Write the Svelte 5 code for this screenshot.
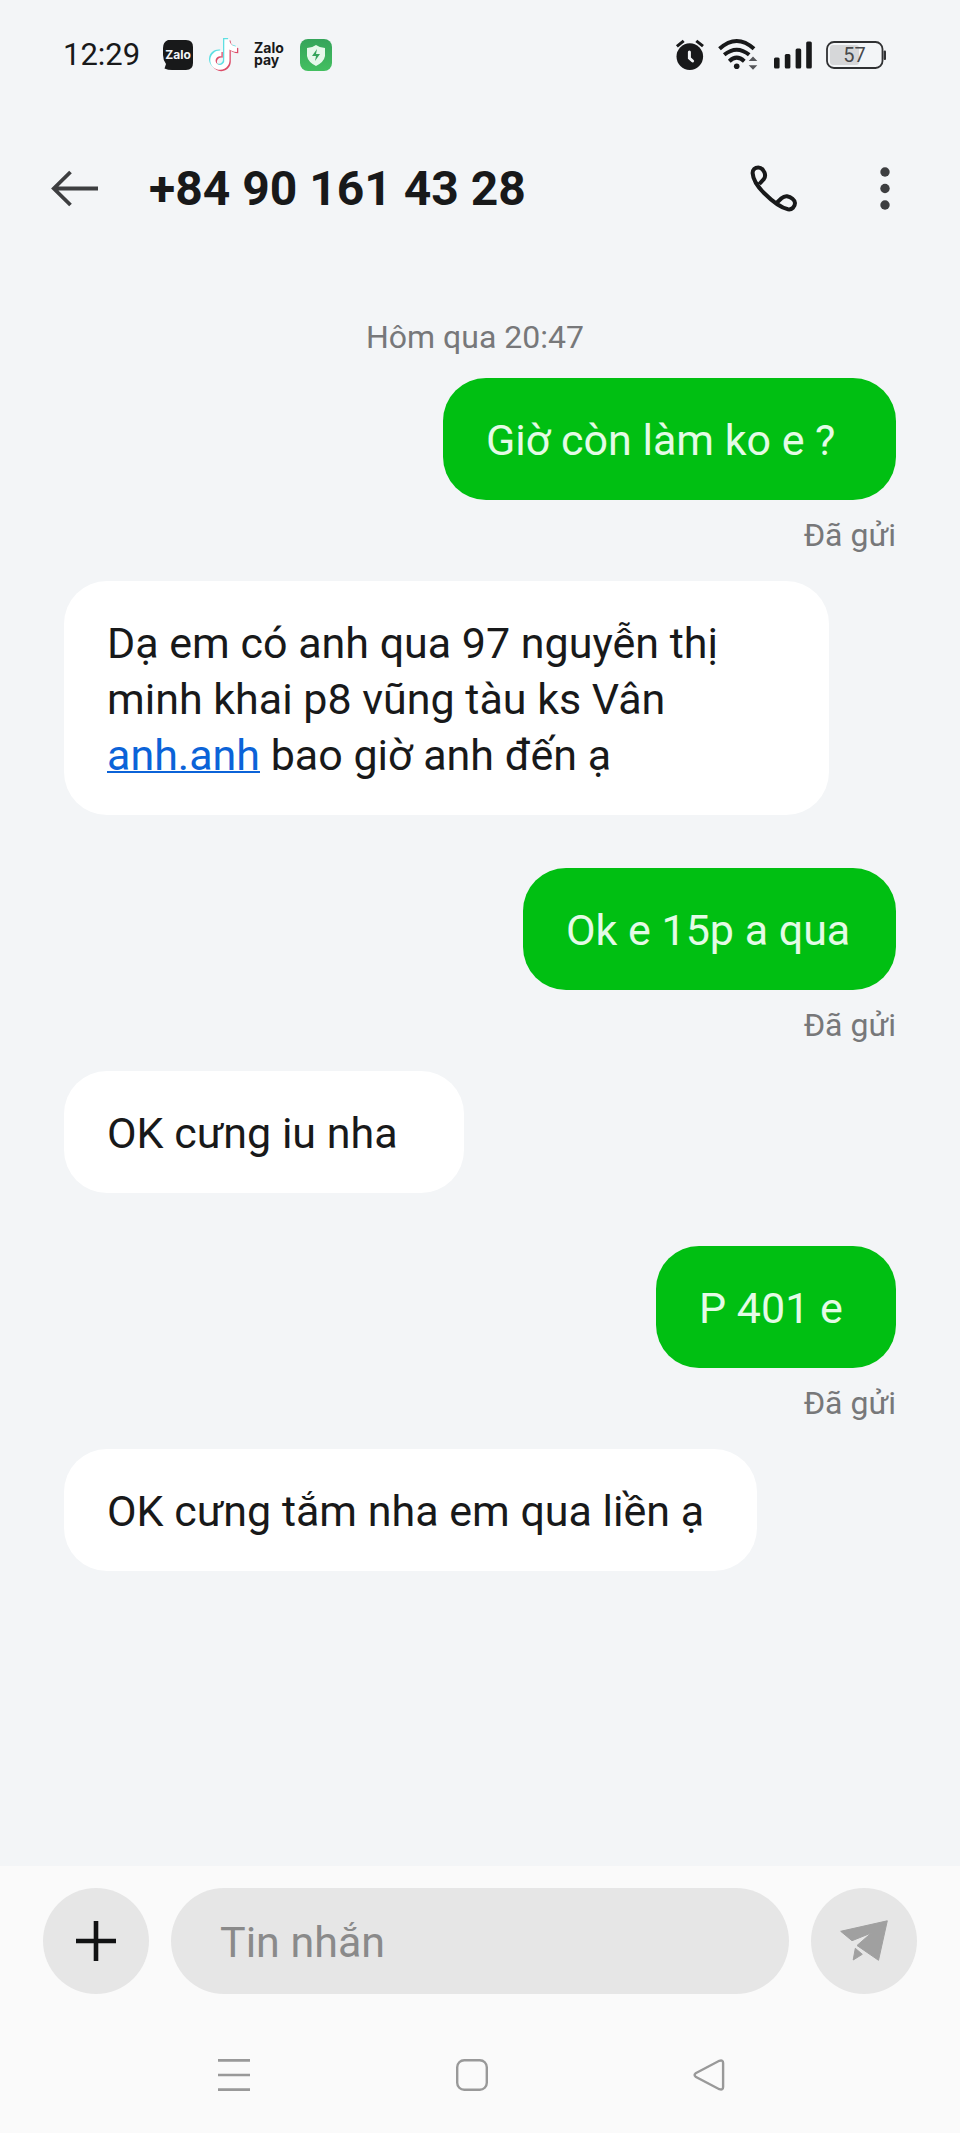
<script lang="ts">
    interface Message {
        text: string;
        mine: boolean;
        width: number;
        link?: string;
        rest?: string;
    }

    const phone = '+84 90 161 43 28';

    const messages: Message[] = [
        { text: 'Giờ còn làm ko e ?', mine: true, width: 453 },
        {
            text: 'Dạ em có anh qua 97 nguyễn thị minh khai p8 vũng tàu ks Vân ',
            link: 'anh.anh',
            rest: ' bao giờ anh đến ạ',
            mine: false,
            width: 765
        },
        { text: 'Ok e 15p a qua', mine: true, width: 373 },
        { text: 'OK cưng iu nha', mine: false, width: 400 },
        { text: 'P 401 e', mine: true, width: 240 },
        { text: 'OK cưng tắm nha em qua liền ạ', mine: false, width: 693 }
    ];

    // The note is drawn three times: cyan, red, then white on top
    const notePath =
        'M12.525.02c1.31-.02 2.61-.01 3.91-.02.08 1.53.63 3.09 1.75 4.17 1.12 1.11 2.7 1.62 4.24 1.79v4.03c-1.44-.05-2.89-.35-4.2-.97-.57-.26-1.1-.59-1.62-.93-.01 2.92.01 5.84-.02 8.75-.08 1.4-.54 2.79-1.35 3.94-1.31 1.92-3.58 3.17-5.91 3.21-1.43.08-2.86-.31-4.08-1.03-2.02-1.19-3.44-3.37-3.65-5.71-.02-.5-.03-1-.01-1.49.18-1.9 1.12-3.72 2.58-4.96 1.66-1.44 3.98-2.13 6.15-1.72.02 1.48-.04 2.96-.04 4.44-.99-.32-2.15-.23-3.02.37-.63.41-1.11 1.04-1.36 1.75-.21.51-.15 1.07-.14 1.61.24 1.64 1.82 3.02 3.5 2.87 1.12-.01 2.19-.66 2.77-1.61.19-.33.4-.67.41-1.06.1-1.79.06-3.57.07-5.36.01-4.03-.01-8.05.02-12.07z';

    let draft = $state('');
</script>

<div class="phone">
    <div class="status-bar">
        <div class="status-left">
            <time class="clock">12:29</time>
            <svg width="32" height="32" viewBox="0 0 32 32" aria-hidden="true">
                <path d="M6 1h18q7 0 7 7v16q0 7-7 7H10Q6 31 2.500 29.500L4 25Q1 21 1 16V9Q1 3 6 1z" fill="#18191a" />
                <text x="16" y="20" class="zalo-badge">Zalo</text>
            </svg>
            <svg width="32" height="34" viewBox="0 0 32 34" aria-hidden="true">
                <g transform="translate(-1 0) scale(1.28)">
                    <path d={notePath} fill="#5fdfe2" />
                    <path d={notePath} fill="#dc4c68" transform="translate(2 1.900)" />
                    <path d={notePath} fill="#fff" transform="translate(1 .9)" />
                </g>
            </svg>
            <svg width="32" height="32" viewBox="0 0 32 32" aria-hidden="true">
                <text class="zalo-pay">
                    <tspan x="0" y="14">Zalo</tspan>
                    <tspan x="0" y="26">pay</tspan>
                </text>
            </svg>
            <svg width="32" height="32" viewBox="0 0 32 32" aria-hidden="true">
                <defs>
                    <linearGradient id="guard" x1="0" y1="0" x2="0" y2="1">
                        <stop offset="0" stop-color="#35a45a" />
                        <stop offset="1" stop-color="#43bf60" />
                    </linearGradient>
                </defs>
                <rect width="32" height="32" rx="8" fill="url(#guard)" />
                <path d="M16 6Q20 9 25 9V17Q24 23 16 27Q8 23 7 17V9Q12 9 16 6z" fill="#e6f8ea" />
                <path d="M17 10l-5 7h4l-1 5 5-7h-4z" fill="#35a45a" />
            </svg>
        </div>
        <div class="status-right">
            <svg width="28" height="32" viewBox="0 0 28 32" aria-hidden="true">
                <circle cx="13.8" cy="17.6" r="13.3" fill="#18191a" />
                <path d="M.9 7.4 7.7 1.8M20.3 1.8 27 7.2" fill="none" stroke="#18191a" stroke-width="3" />
                <path d="M13.4 13v6l3.2 3" fill="none" stroke="#f3f5f7" stroke-width="3" stroke-linecap="round" />
            </svg>
            <svg width="40" height="32" viewBox="0 0 40 32" aria-hidden="true">
                <g fill="none" stroke="#18191a" stroke-width="4">
                    <path d="M1.5 9.8Q18.7-5.8 36 9.8" />
                    <path d="M6.2 15.8Q18.7 5.6 31.2 15.8" />
                    <path d="M11.3 22.2Q18.7 15.2 26.3 22.2" />
                </g>
                <circle cx="18.7" cy="27.3" r="2.8" fill="#18191a" />
                <path d="M30.7 22 35 17.5l4.3 4.5zM30.7 26.2 35 30.7l4.3-4.5z" fill="#55565a" />
            </svg>
            <svg width="40" height="32" viewBox="0 0 40 32" fill="#18191a" aria-hidden="true">
                <rect x="2" y="18.5" width="5.6" height="11" rx="1.5" />
                <rect x="12.8" y="15" width="5.6" height="14.5" rx="1.5" />
                <rect x="23.6" y="9.5" width="5.6" height="20" rx="1.5" />
                <rect x="34.2" y="2.5" width="5.6" height="27" rx="1.5" />
            </svg>
            <svg width="60" height="28" viewBox="0 0 60 28" role="img" aria-label="57%">
                <rect x="4" y="4" width="29" height="20" rx="3" fill="#d6d7d9" />
                <rect x="1" y="1" width="55.5" height="26" rx="7" fill="none" stroke="#303133" stroke-width="1.8" />
                <rect x="57.6" y="9.5" width="2.4" height="9.5" rx="1" fill="#303133" />
                <text x="28.5" y="21" class="battery-text">57</text>
            </svg>
        </div>
    </div>

    <header class="header">
        <button class="icon-button" aria-label="Quay lại">
            <svg width="48" height="48" viewBox="0 0 48 48" fill="none" stroke="#3d3e40" stroke-width="3.8">
                <path d="M47 23.500H3M19.5 7 2.8 23.500l16.700 16.500" />
            </svg>
        </button>
        <h1 class="title">{phone}</h1>
        <button class="icon-button" aria-label="Gọi">
            <svg width="48" height="48" viewBox="0 0 48 48" fill="none" stroke="#18191a" stroke-width="4" stroke-linejoin="round">
                <path d="M9.3 19 13.8 14.2C15.6 12 15.4 10 14.5 7.5 13 4 11 2.4 8.3 2.4 5 2.4 2.6 4.8 2.6 8 3 14 8 22 14 28 21 35 29.5 42.5 38 44.3 42 45 45 41.5 45 38 45 35 41 32 37 31.3 34.5 31 33 32 31.5 33.3L27.3 37.3" />
            </svg>
        </button>
        <button class="icon-button" aria-label="Tùy chọn khác">
            <svg width="48" height="48" viewBox="0 0 48 48" fill="#3d3e40">
                <circle cx="24" cy="7" r="4.7" />
                <circle cx="24" cy="23.5" r="4.7" />
                <circle cx="24" cy="40" r="4.7" />
            </svg>
        </button>
    </header>

    <main class="messages">
        <p class="date">Hôm qua 20:47</p>
        {#each messages as message}
            <div class="message" class:mine={message.mine}>
                <p class="bubble" style="width: {message.width}px">{message.text}{#if message.link}<a href="#anh">{message.link}</a>{message.rest}{/if}</p>
                {#if message.mine}
                    <span class="sent">Đã gửi</span>
                {/if}
            </div>
        {/each}
    </main>

    <footer class="footer">
        <form class="composer" onsubmit={(e) => e.preventDefault()}>
            <button type="button" class="round-button" aria-label="Thêm">
                <svg width="40" height="40" viewBox="0 0 40 40" stroke="#111213" stroke-width="4.6">
                    <path d="M20 0v40M0 20h40" />
                </svg>
            </button>
            <input class="draft" type="text" placeholder="Tin nhắn" aria-label="Tin nhắn" bind:value={draft} />
            <button type="submit" class="round-button" aria-label="Gửi">
                <svg width="48" height="42" viewBox="0 0 48 42" fill="#a0a0a0" stroke="#a0a0a0" stroke-linejoin="round">
                    <path d="M.7 11.3 47.3.8 38.5 40.3 17 25.5 31.3 13 12 20.7z" />
                    <path d="M15.3 28.3 22.3 34.3 13.2 40z" />
                </svg>
            </button>
        </form>
        <nav class="system-nav">
            <button class="icon-button" aria-label="Ứng dụng gần đây">
                <svg width="32" height="32" viewBox="0 0 32 32" stroke="#999" stroke-width="2.6">
                    <path d="M0 1.4h32M0 16h32M0 30.6h32" />
                </svg>
            </button>
            <button class="icon-button" aria-label="Màn hình chính">
                <svg width="32" height="32" viewBox="0 0 32 32" fill="none" stroke="#999" stroke-width="2.4">
                    <rect x="1.2" y="1.2" width="29.6" height="29.6" rx="7" />
                </svg>
            </button>
            <button class="icon-button" aria-label="Trở về">
                <svg width="32" height="32" viewBox="0 0 32 32" fill="none" stroke="#999" stroke-width="2.4">
                    <path d="M1.6 14.3 25.3 1.8Q29.1.5 29.1 4V28Q29.1 31.5 25.3 30.2L1.6 17.7Q-.4 16 1.6 14.3z" />
                </svg>
            </button>
        </nav>
    </footer>
</div>

<style>
    :global(body) {
        margin: 0;
        background: #f3f5f7;
    }

    .phone {
        display: flex;
        flex-direction: column;
        min-height: 100vh;
        background: #f3f5f7;
        color: #18191a;
        font-family: Roboto, "Noto Sans", sans-serif;
    }

    svg {
        display: block;
        flex-shrink: 0;
        overflow: visible;
    }

    .status-bar {
        display: flex;
        align-items: center;
        justify-content: space-between;
        height: 110px;
        padding: 0 74px 0 63px;
    }

    .status-left,
    .status-right {
        display: flex;
        align-items: center;
        gap: 14px;
    }

    .clock {
        margin-right: 8px;
        font-size: 31px;
        line-height: 40px;
    }

    .zalo-badge {
        font: 700 12px Inter, sans-serif;
        text-anchor: middle;
        fill: #f3f5f7;
    }

    .zalo-pay {
        font: 700 14px Inter, sans-serif;
        fill: #18191a;
    }

    .battery-text {
        font-size: 20px;
        text-anchor: middle;
        fill: #48494b;
    }

    .icon-button {
        padding: 0;
        border: none;
        background: none;
        cursor: pointer;
    }

    .header {
        display: flex;
        align-items: center;
        height: 157px;
        padding: 0 51px;
    }

    .title {
        flex: 1;
        margin: 0 0 0 50px;
        font-size: 48px;
        font-weight: 700;
        line-height: 56px;
    }

    .header .icon-button:last-child {
        margin-left: 63px;
    }

    .messages {
        flex: 1;
        padding: 50px 64px;
    }

    .date {
        margin: 0 0 21px;
        padding-right: 10px;
        color: #77787a;
        font-size: 32px;
        line-height: 40px;
        text-align: center;
    }

    .message {
        display: flex;
        flex-direction: column;
        align-items: flex-start;
        margin-bottom: 53px;
    }

    .message.mine {
        align-items: flex-end;
        margin-bottom: 26px;
    }

    .bubble {
        box-sizing: border-box;
        max-width: 100%;
        margin: 0;
        padding: 34px 43px 32px;
        border-radius: 43px;
        background: #fff;
        font-size: 43px;
        line-height: 56px;
    }

    .bubble a {
        color: #0b63d8;
        text-decoration-thickness: 2px;
    }

    .mine .bubble {
        background: #00bf12;
        color: #e4fbe6;
    }

    .sent {
        margin-top: 15px;
        color: #77787a;
        font-size: 32px;
        line-height: 40px;
    }

    .footer {
        background: #fafafa;
    }

    .composer {
        display: flex;
        gap: 22px;
        padding: 22px 43px;
    }

    .round-button {
        display: flex;
        align-items: center;
        justify-content: center;
        flex-shrink: 0;
        width: 106px;
        height: 106px;
        padding: 0;
        border: none;
        border-radius: 50%;
        background: #e6e6e6;
        cursor: pointer;
    }

    .draft {
        flex: 1;
        min-width: 0;
        height: 106px;
        box-sizing: border-box;
        padding: 2px 49px 0;
        border: none;
        border-radius: 53px;
        outline: none;
        background: #e6e6e6;
        color: #18191a;
        font-family: inherit;
        font-size: 43px;
    }

    .draft::placeholder {
        color: #8a8a8a;
        opacity: 1;
    }

    .system-nav {
        display: grid;
        grid-template-columns: repeat(3, 1fr);
        place-items: center;
        height: 117px;
        padding: 0 131px 0 115px;
    }
</style>
